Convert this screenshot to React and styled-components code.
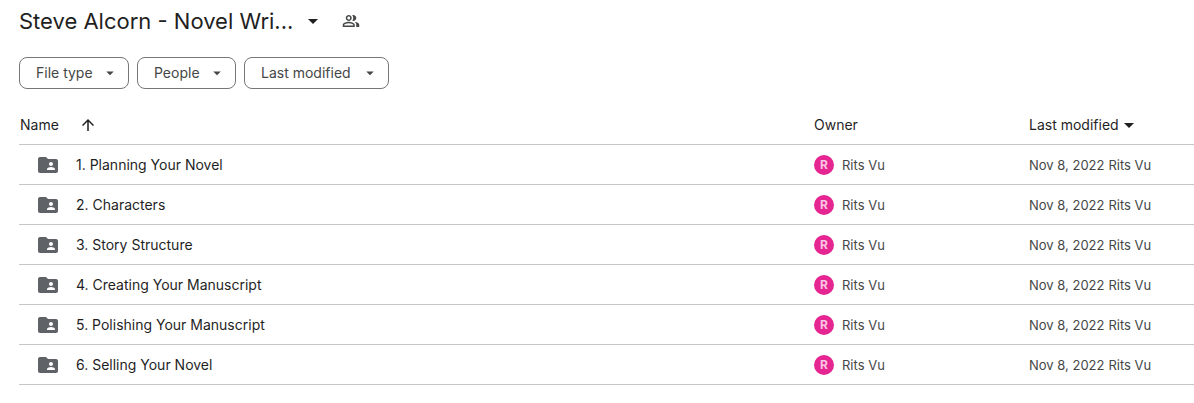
import React from "react";
import styled, { createGlobalStyle } from "styled-components";

const files = [
  "1. Planning Your Novel",
  "2. Characters",
  "3. Story Structure",
  "4. Creating Your Manuscript",
  "5. Polishing Your Manuscript",
  "6. Selling Your Novel",
];

const filters = [
  { label: "File type", width: 110 },
  { label: "People", width: 99 },
  { label: "Last modified", width: 145 },
];

const icons = {
  caret: "M7 10l5 5 5-5z",
  up: "M4 12l1.41 1.41L11 7.83V20h2V7.83l5.58 5.59L20 12l-8-8-8 8z",
  people:
    "M15 8c0-1.42-.5-2.73-1.33-3.76.42-.14.86-.24 1.33-.24 2.21 0 4 1.79 4 4s-1.79 4-4 4c-.43 0-.84-.09-1.23-.21-.03-.01-.06-.02-.1-.03A5.98 5.98 0 0 0 15 8zm1.66 5.13C18.03 14.06 19 15.32 19 17v3h4v-3c0-2.18-3.58-3.47-6.34-3.87zM9 6c-1.1 0-2 .9-2 2s.9 2 2 2 2-.9 2-2-.9-2-2-2zm0 9c-2.7 0-5.8 1.29-6 2.01V18h12v-1c-.2-.71-3.3-2-6-2zM9 4c2.21 0 4 1.79 4 4s-1.79 4-4 4-4-1.79-4-4 1.79-4 4-4zm0 9c2.67 0 8 1.34 8 4v3H1v-3c0-2.66 5.33-4 8-4z",
  folder:
    "M20 6h-8l-2-2H4c-1.1 0-1.99.9-1.99 2L2 18c0 1.1.9 2 2 2h16c1.1 0 2-.9 2-2V8c0-1.1-.9-2-2-2zm-5 3c1.1 0 2 .9 2 2s-.9 2-2 2-2-.9-2-2 .9-2 2-2zm4 8h-8v-1c0-1.33 2.67-2 4-2s4 .67 4 2v1z",
};

const Icon = ({ name, size = 24 }) => (
  <svg width={size} height={size} viewBox="0 0 24 24" aria-hidden="true">
    <path d={icons[name]} fill="currentColor" fillRule="evenodd" />
  </svg>
);

const App = () => {
  return (
    <Page>
      <GlobalStyle />
      <TitleBar>
        <TitleButton>
          <Title>Steve Alcorn - Novel Wri...</Title>
          <Icon name="caret" />
        </TitleButton>
        <ShareButton aria-label="Manage access">
          <Icon name="people" size={18} />
        </ShareButton>
      </TitleBar>

      <Filters>
        {filters.map((filter) => (
          <Chip key={filter.label} $width={filter.width}>
            {filter.label}
            <Icon name="caret" size={18} />
          </Chip>
        ))}
      </Filters>

      <FileTable>
        <thead>
          <tr>
            <HeadCell $inset={1}>
              <SortButton $gap={20}>
                Name
                <Icon name="up" size={18} />
              </SortButton>
            </HeadCell>
            <HeadCell $width={215}>Owner</HeadCell>
            <HeadCell $width={165}>
              <SortButton $gap={-2}>
                Last modified
                <Icon name="caret" />
              </SortButton>
            </HeadCell>
          </tr>
        </thead>
        <tbody>
          {files.map((file) => (
            <tr key={file}>
              <Cell>
                <FileName>
                  <Icon name="folder" />
                  <span>{file}</span>
                </FileName>
              </Cell>
              <Cell>
                <Owner>
                  <Avatar>R</Avatar>
                  Rits Vu
                </Owner>
              </Cell>
              <Cell>
                <Modified>
                  <span>Nov 8, 2022</span>
                  <span>Rits Vu</span>
                </Modified>
              </Cell>
            </tr>
          ))}
        </tbody>
      </FileTable>
    </Page>
  );
};

const GlobalStyle = createGlobalStyle`
  body {
    margin: 0;
    background: #fff;
  }

  * {
    box-sizing: border-box;
  }

  button {
    padding: 0;
    border: 0;
    background: none;
    color: inherit;
    font: inherit;
    cursor: pointer;
  }

  svg {
    display: block;
    flex: none;
  }
`;

const Page = styled.main`
  padding: 5px 0 16px 19px;
  font-family: "Google Sans", Inter, Roboto, sans-serif;
  font-size: 14px;
  line-height: 20px;
  color: #1f1f1f;
`;

const TitleBar = styled.header`
  display: flex;
  align-items: center;
  gap: 17px;
  height: 32px;
`;

const TitleButton = styled.button`
  display: flex;
  align-items: center;
  gap: 8px;
`;

const Title = styled.h1`
  margin: 0;
  font-size: 22px;
  font-weight: 400;
  line-height: 32px;
`;

const ShareButton = styled.button`
  color: #444746;
`;

const Filters = styled.div`
  display: flex;
  gap: 8px;
  margin-top: 20px;
`;

const Chip = styled.button`
  && {
    display: flex;
    align-items: center;
    justify-content: space-between;
    min-width: ${(props) => props.$width}px;
    height: 32px;
    padding: 0 9px 0 16px;
    border: 1px solid #747775;
    border-radius: 8px;
    color: #444746;
  }
`;

const FileTable = styled.table`
  width: 100%;
  margin-top: 16px;
  table-layout: fixed;
  border-collapse: separate;
  border-spacing: 0;
`;

const HeadCell = styled.th`
  width: ${(props) => (props.$width ? `${props.$width}px` : "auto")};
  height: 40px;
  padding: 0 0 0 ${(props) => props.$inset || 0}px;
  border-bottom: 1px solid #c7c7c7;
  font-weight: 400;
  text-align: left;
`;

const SortButton = styled.button`
  display: flex;
  align-items: center;

  svg {
    margin-left: ${(props) => props.$gap}px;
  }
`;

const Cell = styled.td`
  height: 40px;
  padding: 0;
  border-bottom: 1px solid #c7c7c7;
`;

const FileName = styled.div`
  display: flex;
  align-items: center;
  gap: 16px;
  padding-left: 17px;

  svg {
    color: #5f6368;
  }
`;

const Owner = styled.div`
  display: flex;
  align-items: center;
  gap: 8px;
  color: #444746;
  font-size: 13px;
`;

const Avatar = styled.span`
  display: flex;
  align-items: center;
  justify-content: center;
  width: 20px;
  height: 20px;
  border-radius: 50%;
  background: #e52592;
  color: #fbc4e2;
  font-size: 12px;
  font-weight: 700;
`;

const Modified = styled.div`
  display: flex;
  gap: 4px;
  color: #444746;
  font-size: 13px;
`;

export default App;
